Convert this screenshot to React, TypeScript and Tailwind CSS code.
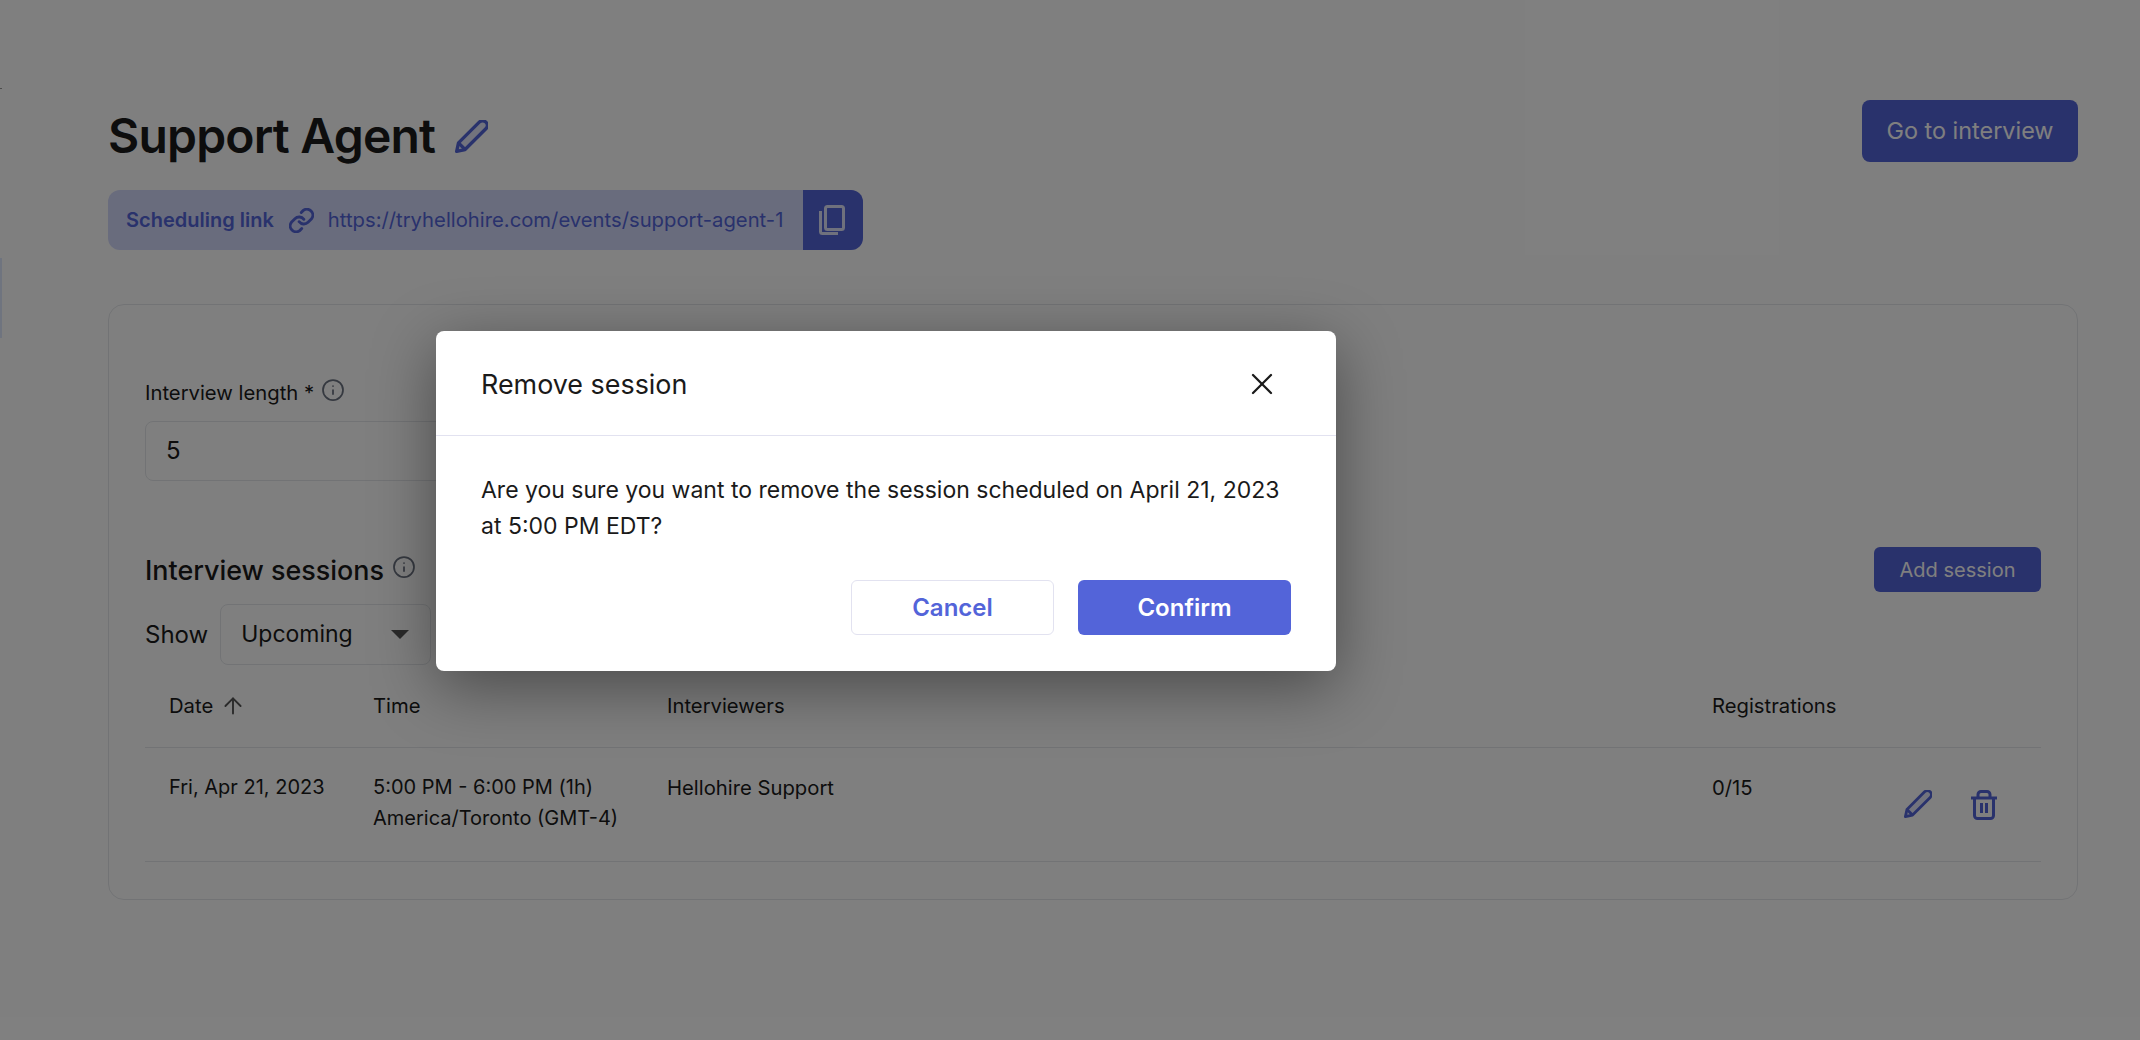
import { ArrowUp, Info, X } from "lucide-react"

const font = "font-['Inter',sans-serif]"

function Pencil({ className }: { className: string }) {
    return (
        <svg viewBox="2 2 20 20" className={className} fill="#e4e7fb" stroke="currentColor" strokeWidth="2" strokeLinejoin="round">
            <path d="M3 21l1.1-5.1L16.7 3.3a2.8 2.8 0 0 1 4 4L8.1 19.9 3 21z" />
            <path d="M4.1 15.9l4 4" />
        </svg>
    )
}

function Trash({ className }: { className: string }) {
    return (
        <svg viewBox="0 0 26 30" className={className} fill="none" stroke="currentColor" strokeWidth="3" strokeLinejoin="round">
            <path d="M0 8h26" />
            <path d="M7 8V4.5a3 3 0 0 1 3-3h6a3 3 0 0 1 3 3V8" />
            <path d="M3.5 8v17.5a3 3 0 0 0 3 3h13a3 3 0 0 0 3-3V8" />
            <path d="M10.5 13v10M15.5 13v10" />
        </svg>
    )
}

function LinkIcon({ className }: { className: string }) {
    return (
        <svg viewBox="1.5 1.5 21 21" className={className} fill="none" stroke="currentColor" strokeWidth="2.4" strokeLinecap="round" strokeLinejoin="round">
            <path d="M10 13a5 5 0 0 0 7.5.5l3-3a5 5 0 0 0-7-7l-1.7 1.7" />
            <path d="M14 11a5 5 0 0 0-7.5-.5l-3 3a5 5 0 0 0 7 7l1.7-1.7" />
        </svg>
    )
}

function CopyIcon({ className }: { className: string }) {
    return (
        <svg viewBox="0 0 26 30" className={className} fill="none" stroke="currentColor" strokeWidth="3">
            <rect x="6.5" y="1.5" width="18" height="23" rx="2" />
            <path d="M1.5 6v20.5a2 2 0 0 0 2 2H19" />
        </svg>
    )
}

export default function App() {
    return (
        <div className={`${font} relative h-[1040px] w-[2140px] overflow-hidden bg-white text-[#1a1a1a]`}>
            <div className="absolute left-0 top-[88px] h-px w-[2px] bg-[#999999]" />
            <div className="absolute left-0 top-[258px] h-[80px] w-[2px] bg-[#dfe8ff]" />

            <div className="px-[108px] pt-[100px] pr-[62px]">
                <div className="flex items-start justify-between">
                    <div className="flex items-center gap-[20px] pt-[4px]">
                        <h1 className="text-[48px] font-semibold leading-[64px] tracking-[-0.8px]">Support Agent</h1>
                        <Pencil className="h-[33px] w-[33px] text-[#5364d9]" />
                    </div>
                    <button className="h-[62px] w-[216px] rounded-lg bg-[#5364d9] text-[23.4px] text-white">Go to interview</button>
                </div>

                <div className="mt-[22px] flex h-[60px] w-[755px] items-center overflow-hidden rounded-xl bg-[#d3d8fb] text-[20px] text-[#5364d9]">
                    <span className="ml-[18px] font-semibold">Scheduling link</span>
                    <LinkIcon className="ml-[15px] h-[25px] w-[25px]" />
                    <span className="ml-[14px] flex-1 text-[20.25px]">https://tryhellohire.com/events/support-agent-1</span>
                    <div className="flex h-full w-[60px] items-center justify-center bg-[#5364d9] pr-[2px] text-[#dfe2fa]">
                        <CopyIcon className="h-[30px] w-[26px]" />
                    </div>
                </div>

                <div className="mt-[54px] h-[596px] rounded-2xl border border-[#e5e7eb] pl-[36px] pr-[36px] pt-[70px]">
                    <div className="flex items-center gap-[7px] text-[20.25px] leading-[36px]">
                        Interview length *
                        <Info className="mt-[-6px] h-[24px] w-[24px] text-[#6b7280]" strokeWidth={1.75} />
                    </div>
                    <div className="mt-[10px] flex h-[60px] w-[860px] items-center rounded-lg border border-[#e5e7eb] px-[20px] text-[24px]">5</div>

                    <div className="mt-[66px] flex items-center justify-between">
                        <div className="flex items-center gap-[8px]">
                            <h2 className="text-[26.9px] font-medium leading-[44px]">Interview sessions</h2>
                            <Info className="mt-[-6px] h-[24px] w-[24px] text-[#6b7280]" strokeWidth={1.75} />
                        </div>
                        <button className="h-[45px] w-[167px] rounded-md bg-[#5364d9] text-[20px] text-white">Add session</button>
                    </div>

                    <div className="mt-[12px] flex items-center gap-[12px]">
                        <span className="text-[24px]">Show</span>
                        <div className="flex h-[61px] w-[211px] items-center justify-between rounded-lg border border-[#e5e7eb] pl-[20px] pr-[21px] text-[23px]">
                            Upcoming
                            <svg viewBox="0 0 18 9" className="h-[9px] w-[18px] text-[#555555]" fill="currentColor"><path d="M0 0h18L9 9z" /></svg>
                        </div>
                    </div>

                    <div className="flex h-[83px] items-center border-b border-[#e5e7eb] text-[20.25px]">
                        <div className="flex w-[228px] items-center gap-[7px] pl-[24px]">Date <ArrowUp className="h-[26px] w-[26px] text-[#555555]" strokeWidth={1.75} /></div>
                        <div className="w-[294px]">Time</div>
                        <div className="w-[1045px]">Interviewers</div>
                        <div>Registrations</div>
                    </div>
                    <div className="flex h-[114px] border-b border-[#e5e7eb] pt-[24px] text-[20.25px] leading-[31px]">
                        <div className="w-[228px] pl-[24px] text-[20px]">Fri, Apr 21, 2023</div>
                        <div className="w-[294px] text-[20px]">
                            <div>5:00 PM - 6:00 PM (1h)</div>
                            <div>America/Toronto (GMT-4)</div>
                        </div>
                        <div className="w-[1045px]">Hellohire Support</div>
                        <div className="w-[192px]">0/15</div>
                        <div className="flex gap-[39px] pt-[18px] text-[#5364d9]">
                            <Pencil className="h-[28px] w-[28px]" />
                            <Trash className="h-[30px] w-[26px]" />
                        </div>
                    </div>
                </div>
            </div>

            <div className="absolute inset-0 bg-black/50" />

            <div className="absolute left-[436px] top-[331px] h-[340px] w-[900px] rounded-lg bg-white shadow-[0_16px_64px_rgba(0,0,0,0.42)]">
                <div className="flex h-[105px] items-center justify-between border-b border-[#e2e2f0] pl-[45px] pr-[56px]">
                    <h3 className="mt-[1px] text-[26.9px] leading-[36px]">Remove session</h3>
                    <X className="mt-[1px] h-[36px] w-[36px]" strokeWidth={1.5} />
                </div>
                <p className="mt-[36px] px-[45px] text-[23px] leading-[36px]">
                    Are you sure you want to remove the session scheduled on April 21, 2023 at 5:00 PM EDT?
                </p>
                <div className="mt-[36px] flex justify-end gap-[24px] pr-[45px]">
                    <button className="h-[55px] w-[203px] rounded-md border border-[#e2e2f0] bg-white text-[24px] font-semibold text-[#5364d9]">Cancel</button>
                    <button className="h-[55px] w-[213px] rounded-md bg-[#5364d9] text-[24px] font-semibold text-white">Confirm</button>
                </div>
            </div>
        </div>
    )
}
